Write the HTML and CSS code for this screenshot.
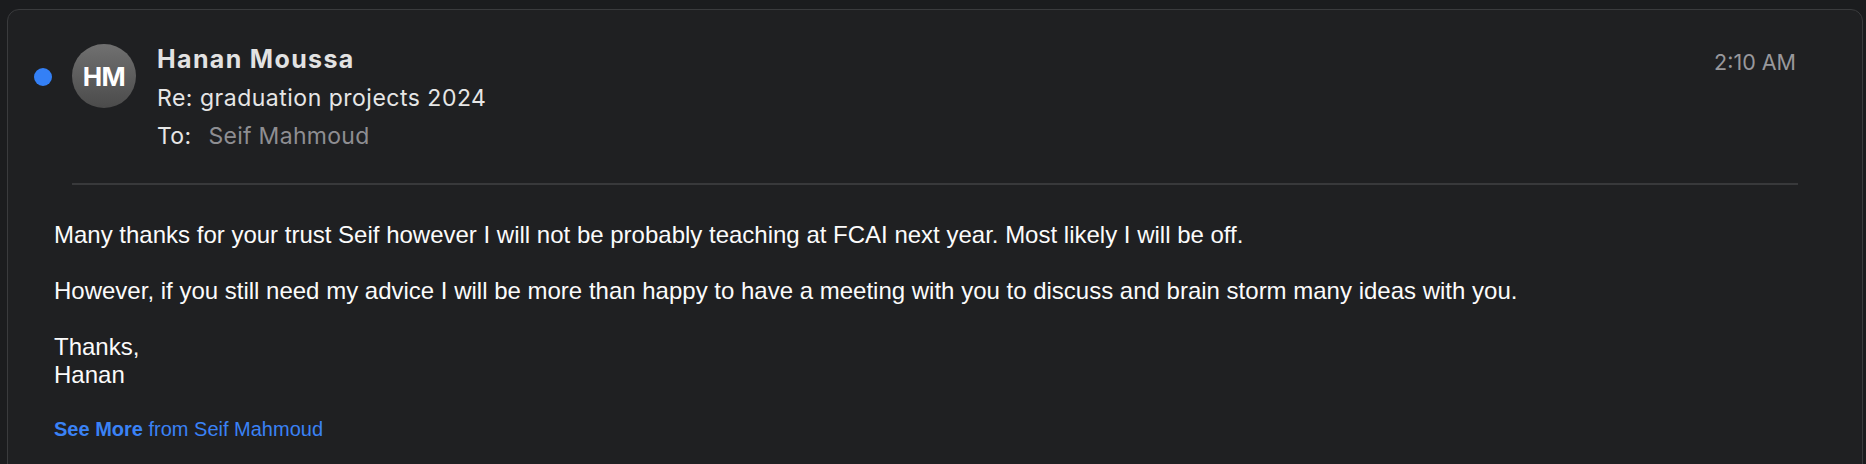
FILE: index.html
```html
<!DOCTYPE html>
<html lang="en">
<head>
<meta charset="utf-8">
<title>Re: graduation projects 2024</title>
<link rel="stylesheet" href="styles.css">
</head>
<body>
<div class="card">
  <div class="header">
    <span class="dot"></span>
    <div class="avatar">HM</div>
    <div class="meta">
      <div class="name">Hanan Moussa</div>
      <div class="subject">Re: graduation projects 2024</div>
      <div class="to"><span class="to-label">To:</span><span class="to-name">Seif Mahmoud</span></div>
    </div>
    <div class="time">2:10 AM</div>
  </div>
  <div class="sep"></div>
  <div class="body">
    <p>Many thanks for your trust Seif however I will not be probably teaching at FCAI next year. Most likely I will be off.</p>
    <p>However, if you still need my advice I will be more than happy to have a meeting with you to discuss and brain storm many ideas with you.</p>
    <p>Thanks,<br>Hanan</p>
    <div class="more"><b>See More</b> from Seif Mahmoud</div>
  </div>
</div>
</body>
</html>
```
FILE: styles.css
```css
html, body {
  margin: 0;
  padding: 0;
  background: #1b1c1e;
  height: 100%;
  overflow: hidden;
}
.card {
  margin: 9px 3px 0 7px;
  height: 600px;
  border: 1px solid #3a3b3d;
  border-radius: 12px;
  background: #1f2022;
  font-family: Inter, "Liberation Sans", sans-serif;
}
.header {
  display: flex;
  align-items: flex-start;
  padding: 34px 66px 0 26px;
}
.dot {
  width: 18px;
  height: 18px;
  border-radius: 50%;
  background: #3480f6;
  margin-top: 24px;
  margin-right: 20px;
  flex: none;
}
.avatar {
  width: 64px;
  height: 64px;
  border-radius: 50%;
  background: linear-gradient(#707070, #4b4b4b);
  color: #fff;
  font-weight: 700;
  font-size: 26px;
  display: flex;
  align-items: center;
  justify-content: center;
  flex: none;
  letter-spacing: -0.5px;
}
.meta {
  margin-left: 21px;
}
.name {
  font-size: 25px;
  font-weight: 700;
  letter-spacing: 1.35px;
  line-height: 30px;
  margin-top: 0;
  color: #e2e2e2;
}
.subject {
  font-size: 23px;
  letter-spacing: 0.5px;
  line-height: 37px;
  margin-top: 6px;
  color: #e6e6e6;
}
.to {
  font-size: 23px;
  letter-spacing: 0.3px;
  line-height: 37px;
  margin-top: 1px;
  color: #e6e6e6;
}
.to-name {
  color: #8e8e92;
  margin-left: 17px;
}
.time {
  margin-left: auto;
  margin-top: 3px;
  font-size: 21.5px;
  line-height: 30px;
  color: #98989c;
}
.sep {
  height: 2px;
  background: #38393b;
  margin: 28px 64px 0 64px;
}
.body {
  padding: 35.5px 0 0 46px;
  font-family: "Liberation Sans", Arial, sans-serif;
  font-size: 24px;
  line-height: 28.5px;
  color: #fbfbfb;
}
.body p {
  margin: 0 0 27.5px 0;
}
.more {
  margin-top: 0;
  font-size: 20px;
  line-height: 24px;
  color: #3a82f6;
}
.more b {
  font-weight: 700;
}
```
